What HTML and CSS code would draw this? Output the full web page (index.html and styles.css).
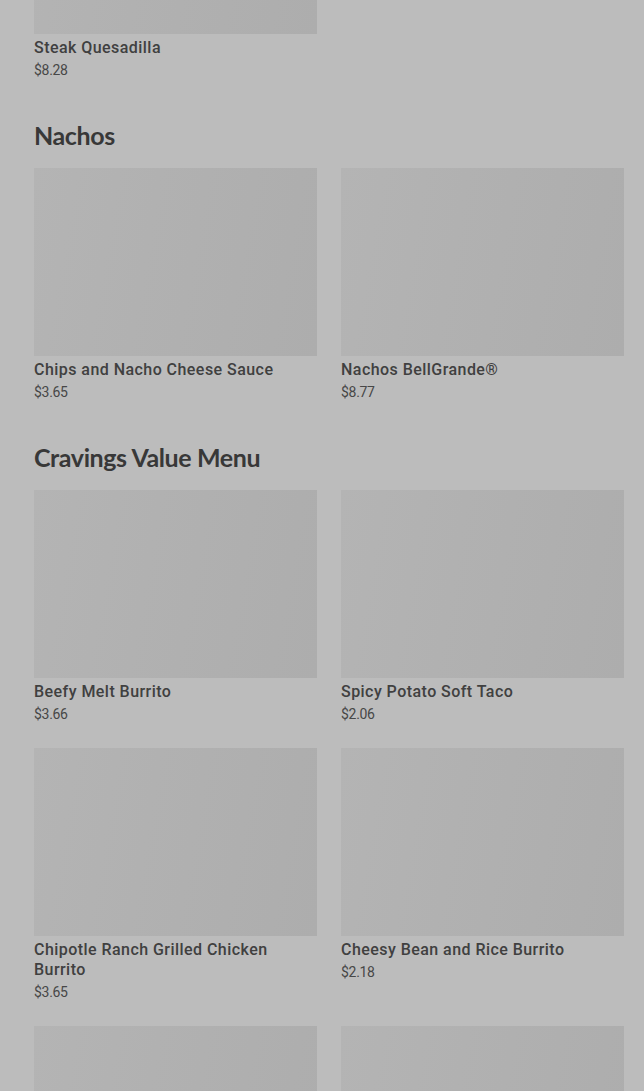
FILE: index.html
```html
<!DOCTYPE html>
<html lang="en">
<head>
<meta charset="utf-8">
<title>Menu</title>
<link rel="stylesheet" href="styles.css">
</head>
<body>
<main class="menu">
  <section class="section section-first">
    <div class="grid">
      <div class="card">
        <div class="thumb"></div>
        <div class="name">Steak Quesadilla</div>
        <div class="price">$8.28</div>
      </div>
    </div>
  </section>

  <section class="section">
    <h2 class="heading">Nachos</h2>
    <div class="grid">
      <div class="card">
        <div class="thumb"></div>
        <div class="name">Chips and Nacho Cheese Sauce</div>
        <div class="price">$3.65</div>
      </div>
      <div class="card">
        <div class="thumb"></div>
        <div class="name">Nachos BellGrande®</div>
        <div class="price">$8.77</div>
      </div>
    </div>
  </section>

  <section class="section">
    <h2 class="heading">Cravings Value Menu</h2>
    <div class="grid">
      <div class="card">
        <div class="thumb"></div>
        <div class="name">Beefy Melt Burrito</div>
        <div class="price">$3.66</div>
      </div>
      <div class="card">
        <div class="thumb"></div>
        <div class="name">Spicy Potato Soft Taco</div>
        <div class="price">$2.06</div>
      </div>
      <div class="card">
        <div class="thumb"></div>
        <div class="name">Chipotle Ranch Grilled Chicken Burrito</div>
        <div class="price">$3.65</div>
      </div>
      <div class="card">
        <div class="thumb"></div>
        <div class="name">Cheesy Bean and Rice Burrito</div>
        <div class="price">$2.18</div>
      </div>
      <div class="card">
        <div class="thumb"></div>
      </div>
      <div class="card">
        <div class="thumb"></div>
      </div>
    </div>
  </section>
</main>
</body>
</html>
```
FILE: styles.css
```css
html, body {
  margin: 0;
  padding: 0;
  background: #bcbcbc;
  overflow: hidden;
}

.menu {
  padding: 0 20px 0 34px;
  margin-top: -154px;
  font-family: Roboto, "Liberation Sans", sans-serif;
  color: #3b3b3b;
}

.section {
  margin-top: 39px;
}

.section-first {
  margin-top: 0;
}

.heading {
  margin: 0 0 17px;
  font-family: Lato, "Open Sans", sans-serif;
  font-weight: 700;
  font-size: 25px;
  line-height: 32px;
  letter-spacing: -0.4px;
  color: #383838;
}

.grid {
  display: grid;
  grid-template-columns: 1fr 1fr;
  column-gap: 24px;
  row-gap: 24px;
}

.thumb {
  height: 188px;
  background: linear-gradient(100deg, #b4b4b4 0%, #b1b1b1 40%, #adadad 100%);
}

.name {
  margin-top: 4px;
  font-size: 16px;
  line-height: 20px;
  font-weight: 500;
  letter-spacing: 0.45px;
  color: #404040;
}

.price {
  margin-top: 2px;
  font-size: 14px;
  line-height: 20px;
  font-weight: 400;
  color: #474747;
  letter-spacing: -0.3px;
}
```
